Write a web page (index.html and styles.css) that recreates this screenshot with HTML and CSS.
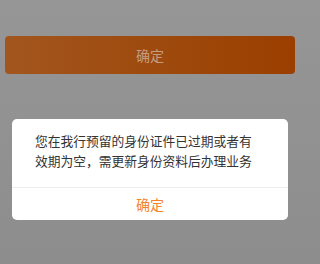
FILE: index.html
```html
<!DOCTYPE html>
<html lang="zh-CN">
<head>
<meta charset="utf-8">
<link rel="stylesheet" href="styles.css">
</head>
<body>
<div class="page">
  <div class="submit">确定</div>
</div>
<div class="mask">
  <div class="dialog">
    <div class="msg">您在我行预留的身份证件已过期或者有效期为空，需更新身份资料后办理业务</div>
    <div class="ok">确定</div>
  </div>
</div>
</body>
</html>
```
FILE: styles.css
```css
html, body {
  margin: 0;
  padding: 0;
}
body {
  width: 300px;
  height: 264px;
  background: linear-gradient(#969696, #8d8d8d);
  font-family: "Noto Sans CJK SC", "Noto Sans", sans-serif;
  position: relative;
  overflow: hidden;
}
.page {
  padding: 36px 5px 0;
}
.submit {
  height: 38px;
  border-radius: 4px;
  background: linear-gradient(90deg, #a2561d, #9b3f00);
  color: #c49c80;
  font-size: 14px;
  display: flex;
  align-items: center;
  justify-content: center;
}
.mask {
  position: absolute;
  inset: 0;
  padding: 119px 12px 0;
}
.dialog {
  background: #fff;
  border-radius: 5px;
  overflow: hidden;
}
.msg {
  padding: 12px 30px 16px 23px;
  font-size: 12.75px;
  line-height: 20px;
  color: #333333;
  border-bottom: 1px solid #eeeeee;
}
.ok {
  height: 32px;
  display: flex;
  align-items: center;
  justify-content: center;
  color: #f5832b;
  font-size: 14px;
}
```
